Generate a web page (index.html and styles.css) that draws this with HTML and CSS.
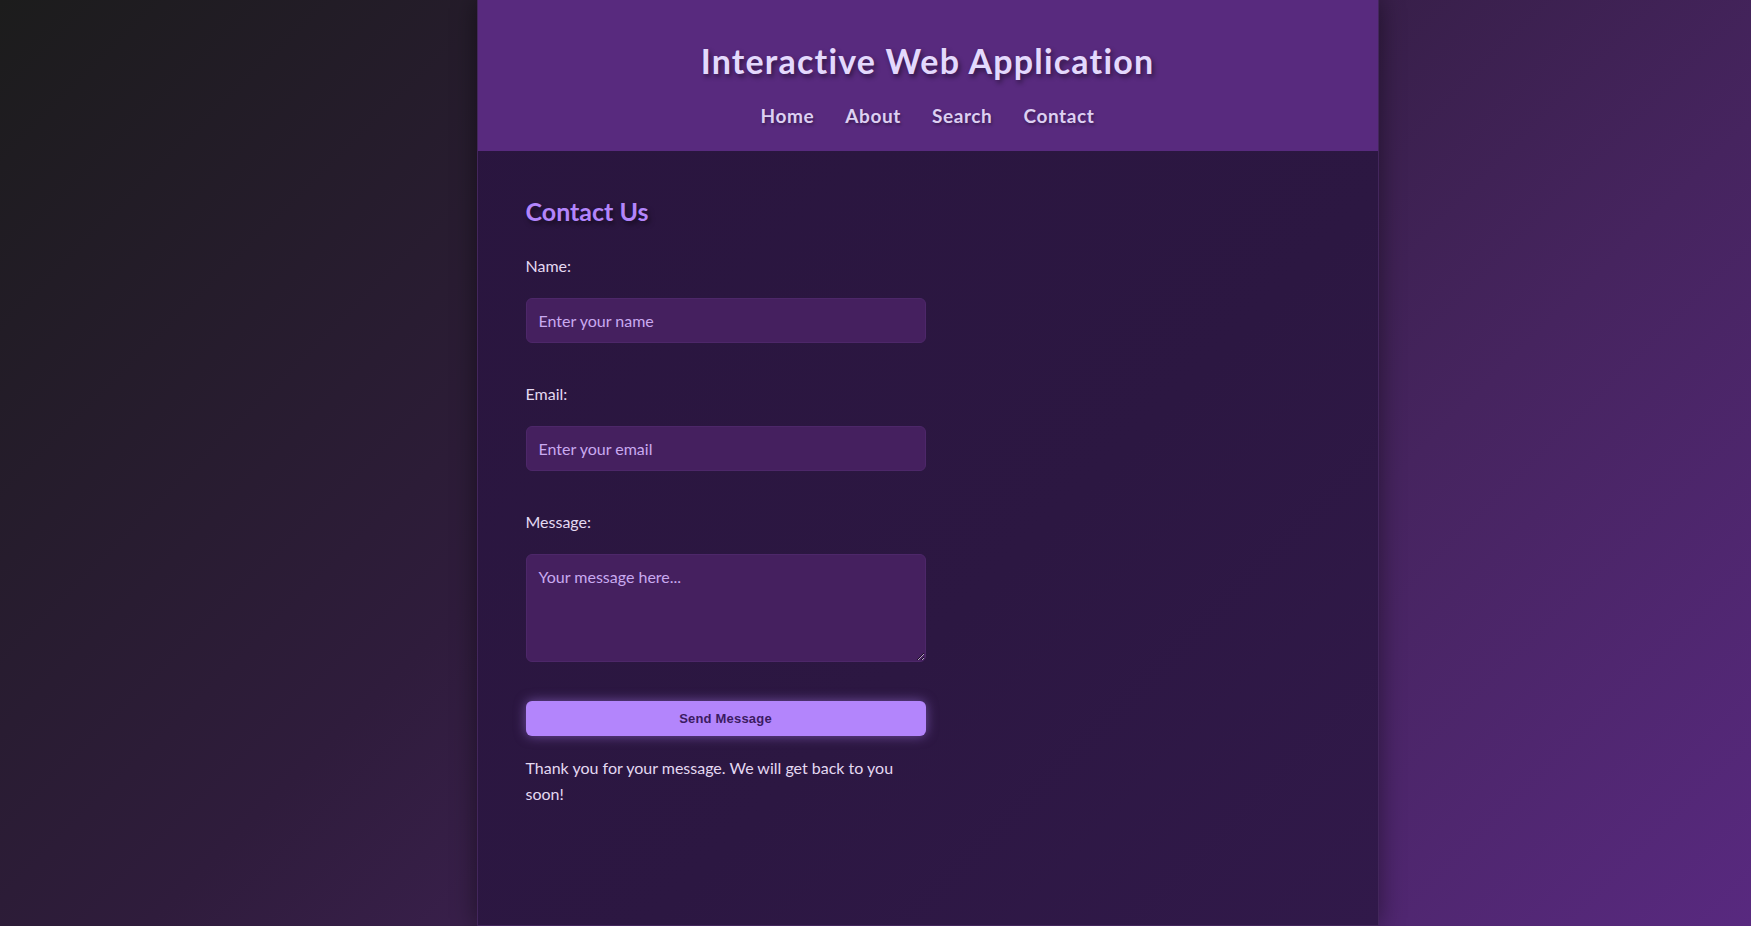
FILE: index.html
```html
<!DOCTYPE html>
<html lang="en">
<head>
<meta charset="utf-8">
<title>Interactive Web Application</title>
<link rel="stylesheet" href="styles.css">
</head>
<body>
<div class="page">
  <div class="app">
    <header class="app-header">
      <h1 class="app-title">Interactive Web Application</h1>
      <nav class="app-nav">
        <a href="#" class="nav-link">Home</a>
        <a href="#" class="nav-link">About</a>
        <a href="#" class="nav-link">Search</a>
        <a href="#" class="nav-link">Contact</a>
      </nav>
    </header>
    <main class="app-main">
      <section class="contact">
        <h2 class="contact-title">Contact Us</h2>
        <form class="contact-form">
          <div class="form-group">
            <label class="form-label" for="name">Name:</label>
            <input class="form-input" id="name" type="text" placeholder="Enter your name">
          </div>
          <div class="form-group">
            <label class="form-label" for="email">Email:</label>
            <input class="form-input" id="email" type="email" placeholder="Enter your email">
          </div>
          <div class="form-group">
            <label class="form-label" for="message">Message:</label>
            <textarea class="form-input form-textarea" id="message" placeholder="Your message here..."></textarea>
          </div>
          <button type="button" class="send-btn">Send Message</button>
          <p class="form-status">Thank you for your message. We will get back to you soon!</p>
        </form>
      </section>
    </main>
  </div>
</div>
</body>
</html>
```
FILE: styles.css
```css
* { box-sizing: border-box; }

html, body {
  margin: 0;
  padding: 0;
  height: 100%;
}

body {
  font-family: "Lato", "Open Sans", sans-serif;
  background: linear-gradient(135deg, #1c1c1c 0%, #2f1c3c 40%, #46245f 70%, #58297f 100%);
  color: #e4d9f2;
  overflow: hidden;
}

.page {
  display: flex;
  justify-content: center;
  padding-left: 104px;
  min-height: 100%;
}

.app {
  width: 902px;
  min-height: 926px;
  border: 1px solid #43265c;
  border-top: none;
  background: linear-gradient(135deg, #29153e 0%, #2c1742 60%, #31194a 100%);
  box-shadow: 0 0 24px rgba(0, 0, 0, 0.45);
  display: flex;
  flex-direction: column;
}

.app-header {
  background: #582a7e;
  padding: 41px 0 23px;
  text-align: center;
}

.app-title {
  margin: 0 0 23px;
  font-size: 34px;
  line-height: 40px;
  font-weight: 700;
  color: #e4d9fd;
  letter-spacing: 1.2px;
  text-shadow: 2px 3px 5px rgba(0, 0, 0, 0.45);
}

.app-nav {
  display: flex;
  justify-content: center;
  gap: 31px;
}

.nav-link {
  font-size: 19px;
  line-height: 24px;
  font-weight: 700;
  letter-spacing: 0.6px;
  color: #ddd0f2;
  text-decoration: none;
  text-shadow: 1px 2px 3px rgba(0, 0, 0, 0.35);
}

.app-main {
  flex: 1;
  padding: 45px 48px 48px;
}

.contact-title {
  margin: 0 0 30px;
  font-size: 25px;
  line-height: 30px;
  font-weight: 700;
  color: #b385fb;
  text-shadow: 2px 3px 5px rgba(0, 0, 0, 0.5);
}

.contact-form {
  width: 400px;
  display: flex;
  flex-direction: column;
}

.form-group {
  display: flex;
  flex-direction: column;
  margin-bottom: 41px;
}

.form-group:last-of-type {
  margin-bottom: 39px;
}

.form-label {
  font-size: 16px;
  line-height: 20px;
  margin-bottom: 22px;
  color: #e4d9f2;
}

.form-input {
  width: 100%;
  height: 45px;
  padding: 12px;
  font-family: "Lato", "Open Sans", sans-serif;
  font-size: 16px;
  line-height: 19px;
  color: #e8dcff;
  background: #45205f;
  border: 1px solid #4d2769;
  border-radius: 6px;
  outline: none;
}

.form-input::placeholder {
  color: #c9aaf0;
}

.form-textarea {
  height: 108px;
  resize: vertical;
}

.send-btn {
  height: 35px;
  padding: 0;
  border: none;
  border-radius: 6px;
  background: #b385fc;
  color: #3b1b62;
  font-family: "Liberation Sans", Arial, sans-serif;
  font-weight: 700;
  font-size: 13px;
  letter-spacing: 0.2px;
  box-shadow: 0 0 12px rgba(179, 133, 252, 0.5);
  cursor: pointer;
}

.form-status {
  margin: 19px 0 0;
  font-size: 16px;
  line-height: 25.6px;
  color: #e4d9f2;
}
```
